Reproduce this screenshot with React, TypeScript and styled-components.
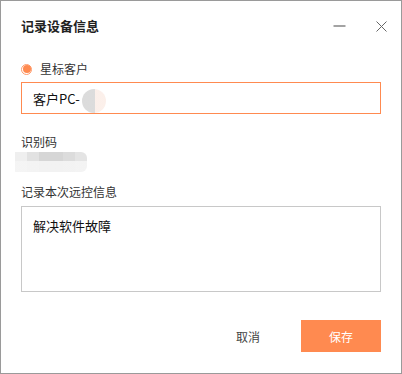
import React from "react";
import styled, { createGlobalStyle } from "styled-components";

const Global = createGlobalStyle`
  html, body { margin: 0; padding: 0; background: #fff; }
  body { font-family: "Noto Sans CJK SC", "Noto Sans", sans-serif; }
  * { box-sizing: border-box; }
`;

const Window = styled.div`
  width: 402px;
  height: 374px;
  border: 1px solid #9a9a9a;
  background: #fff;
  display: flex;
  flex-direction: column;
  color: #333;
  font-size: 12px;
`;

const Header = styled.div`
  height: 52px;
  display: flex;
  align-items: center;
  padding: 0 7px 0 20px;
`;

const Title = styled.div`
  flex: 1;
  font-size: 13px;
  font-weight: 700;
  color: #222;
  line-height: 16px;
  margin-top: -2px;
`;

const WinButton = styled.button<{ $gap?: number }>`
  width: 26px;
  height: 26px;
  border: none;
  background: transparent;
  padding: 0;
  display: flex;
  align-items: center;
  justify-content: center;
  margin-left: ${(p) => p.$gap ?? 0}px;
  margin-top: -2px;
`;

const Body = styled.div`
  padding: 8px 20px 0 20px;
  display: flex;
  flex-direction: column;
`;

const RadioRow = styled.label`
  display: flex;
  align-items: center;
  gap: 8px;
  height: 16px;
  line-height: 16px;
`;

const RadioDot = styled.span`
  width: 11px;
  height: 11px;
  border-radius: 50%;
  border: 1px solid #ff9a6a;
  display: flex;
  align-items: center;
  justify-content: center;
  &::after {
    content: "";
    width: 8px;
    height: 8px;
    border-radius: 50%;
    background: #ff8a50;
  }
`;

const InputBox = styled.div`
  margin-top: 5px;
  height: 32px;
  width: 360px;
  border: 1px solid #ff8a50;
  display: flex;
  align-items: center;
  padding-left: 11px;
  font-size: 13px;
  color: #111;
`;

const NameBlur = styled.span`
  display: inline-block;
  width: 24px;
  height: 24px;
  margin-top: 6px;
  margin-left: 2px;
  border-radius: 12px;
  background: linear-gradient(90deg, #d8d8d8 0 55%, #fbeee8 55% 100%);
  opacity: 0.9;
`;

const FieldLabel = styled.div<{ $top: number }>`
  margin-top: ${(p) => p.$top}px;
  line-height: 16px;
  height: 16px;
  color: #333;
`;

const IdBlur = styled.div`
  margin-top: 2px;
  margin-left: -6px;
  width: 72px;
  height: 20px;
  border-radius: 0 6px 6px 0;
  background:
    linear-gradient(180deg, rgba(255,255,255,0) 0 45%, rgba(245,245,245,0.9) 45% 100%),
    linear-gradient(90deg, #efefef 0 17%, #e2e2e2 17% 33%, #d6d6d6 33% 67%, #dcdcdc 67% 83%, #e4e4e4 83% 100%);
`;

const TextArea = styled.div`
  margin-top: 6px;
  width: 360px;
  height: 86px;
  border: 1px solid #c8c8c8;
  padding: 10px 11px;
  font-size: 13px;
  line-height: 18px;
  color: #111;
`;

const Footer = styled.div`
  margin-top: 28px;
  padding-right: 20px;
  display: flex;
  justify-content: flex-end;
  gap: 13px;
`;

const Btn = styled.button<{ $primary?: boolean }>`
  width: 80px;
  height: 32px;
  border: none;
  font-family: inherit;
  font-size: 12px;
  background: ${(p) => (p.$primary ? "#ff8a50" : "transparent")};
  color: ${(p) => (p.$primary ? "#fff" : "#444")};
  padding: 0;
`;

export default function App() {
  return (
    <>
      <Global />
      <Window>
        <Header>
          <Title>记录设备信息</Title>
          <WinButton aria-label="minimize">
            <svg width="13" height="2" viewBox="0 0 13 2">
              <line x1="0.5" y1="1" x2="12.5" y2="1" stroke="#666" strokeWidth="1.2" />
            </svg>
          </WinButton>
          <WinButton aria-label="close" $gap={16}>
            <svg width="11" height="11" viewBox="0 0 11 11">
              <path d="M0.5 0.5 L10.5 10.5 M10.5 0.5 L0.5 10.5" stroke="#666" strokeWidth="1" />
            </svg>
          </WinButton>
        </Header>
        <Body>
          <RadioRow>
            <RadioDot />
            星标客户
          </RadioRow>
          <InputBox>
            客户PC-
            <NameBlur />
          </InputBox>
          <FieldLabel $top={20}>识别码</FieldLabel>
          <IdBlur />
          <FieldLabel $top={12}>记录本次远控信息</FieldLabel>
          <TextArea>解决软件故障</TextArea>
        </Body>
        <Footer>
          <Btn>取消</Btn>
          <Btn $primary>保存</Btn>
        </Footer>
      </Window>
    </>
  );
}
